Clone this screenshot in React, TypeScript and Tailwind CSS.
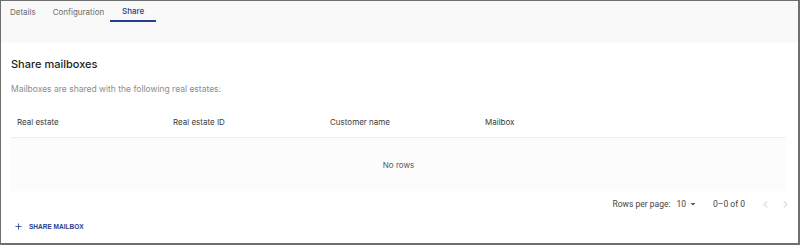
import { ChevronLeft, ChevronRight, Plus } from "lucide-react";

const columns = [
  { label: "Real estate", width: "w-[156px]" },
  { label: "Real estate ID", width: "w-[157px]" },
  { label: "Customer name", width: "w-[155px]" },
  { label: "Mailbox", width: "flex-1" },
];

export default function App() {
  return (
    <div
      className="w-[800px] h-[245px] overflow-hidden bg-white border-t border-l border-r-2 border-b-2 border-[#6f6f6f] flex flex-col"
      style={{ fontFamily: "Inter, 'Noto Sans', sans-serif" }}
    >
      {/* Tabs */}
      <div className="h-[42px] bg-[#f9f9f9] flex items-start pl-[9px] shrink-0 text-[8px]">
        <div className="h-[21px] flex items-center pr-[17px] text-[#6b6b6b]">Details</div>
        <div className="h-[21px] flex items-center text-[#6b6b6b]">Configuration</div>
        <div className="h-[21px] ml-[6px] w-[46px] flex items-center justify-center text-[#233f8c] font-medium border-b-2 border-[#233f8c]">
          Share
        </div>
      </div>

      {/* Content */}
      <div className="flex flex-col px-[10px] pt-[13px]">
        <h2 className="text-[11px] font-medium text-[#1e1e1e] leading-[16px]">Share mailboxes</h2>
        <p className="mt-[10px] text-[8.5px] text-[#8d8d8d] leading-[14px]">
          Mailboxes are shared with the following real estates:
        </p>

        {/* Table */}
        <div className="mt-[11px] mr-[2px]">
          <div className="flex h-[31px] items-center border-b border-[#ececec] px-[6px]">
            {columns.map((c) => (
              <div key={c.label} className={`${c.width} text-[8px] text-[#3a3a3a]`}>
                {c.label}
              </div>
            ))}
          </div>
          <div className="h-[53px] bg-[#fcfcfc] flex items-center justify-center text-[8px] text-[#555]">
            No rows
          </div>
        </div>

        {/* Pagination */}
        <div
          className="flex items-center justify-end h-[26px] mr-[-3px] text-[8.5px] text-[#444]"
          style={{ fontFamily: "Roboto, sans-serif" }}
        >
          <span>Rows per page:</span>
          <span className="ml-[6px]">10</span>
          <svg width="8" height="8" viewBox="0 0 8 8" className="ml-[3px]">
            <path d="M1.5 3 L4 5.5 L6.5 3 Z" fill="#555" />
          </svg>
          <span className="ml-[16px]">0–0 of 0</span>
          <ChevronLeft className="ml-[15px] w-[11px] h-[11px] text-[#bdbdbd]" />
          <ChevronRight className="ml-[9px] w-[11px] h-[11px] text-[#bdbdbd]" />
        </div>

        {/* Share button */}
        <button
          className="mt-[5px] flex items-center gap-[6px] text-[#233f8c] text-[6.5px] font-bold uppercase w-fit pl-[3px]"
          style={{ fontFamily: "'Liberation Sans', Arial, sans-serif" }}
        >
          <Plus className="w-[9px] h-[9px]" strokeWidth={2.2} />
          Share mailbox
        </button>
      </div>
    </div>
  );
}
